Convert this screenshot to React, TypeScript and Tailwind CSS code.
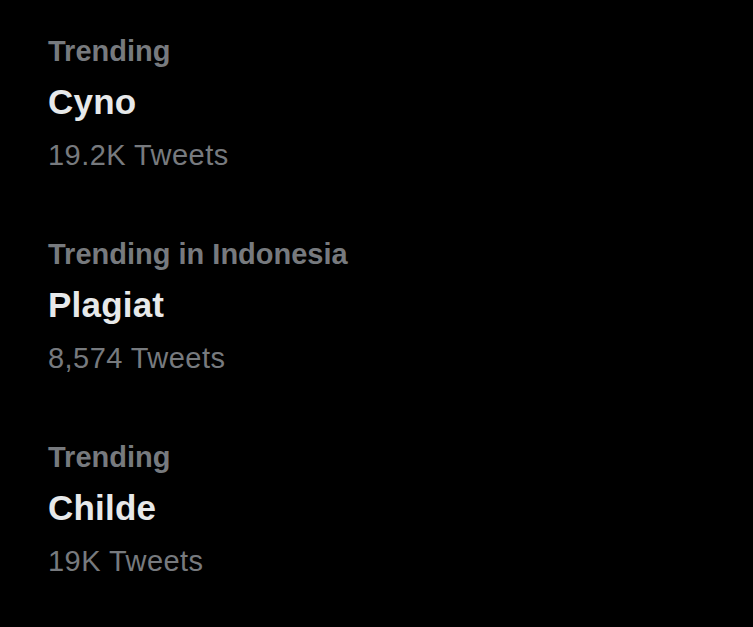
import React from "react";

const trends = [
  { label: "Trending", title: "Cyno", count: "19.2K Tweets" },
  { label: "Trending in Indonesia", title: "Plagiat", count: "8,574 Tweets" },
  { label: "Trending", title: "Childe", count: "19K Tweets" },
];

export default function App() {
  return (
    <div
      className="min-h-screen w-full bg-black pl-[48px] pt-[31px]"
      style={{ fontFamily: '"Liberation Sans", Arial, sans-serif' }}
    >
      {trends.map((t, i) => (
        <div key={i} className="mb-[59px]">
          <div className="text-[29px] leading-[40px] font-bold text-[#777a7e]">
            {t.label}
          </div>
          <div className="mt-[9px] text-[35px] leading-[44px] font-bold tracking-[0.2px] text-[#e7e9ea]">
            {t.title}
          </div>
          <div className="mt-[11px] text-[29px] leading-[40px] tracking-[0.45px] text-[#777a7e]">
            {t.count}
          </div>
        </div>
      ))}
    </div>
  );
}
